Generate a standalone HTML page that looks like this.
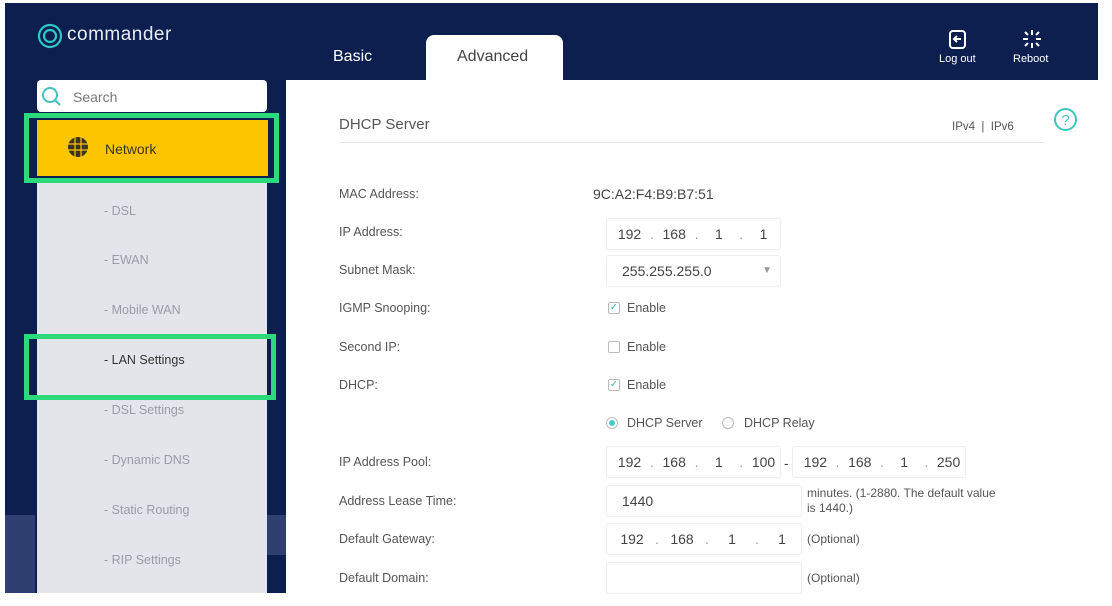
<!DOCTYPE html>
<html><head><style>
body{margin:0;width:1112px;height:606px;background:#fff;position:relative;overflow:hidden;font-family:"Liberation Sans",sans-serif;}
.a{position:absolute}
.navy{left:5px;top:3px;width:1093px;height:590px;background:#0d1f4f}
.side{left:37px;top:180px;width:230px;height:413px;background:#e3e5ea}
.si{position:absolute;left:104px;font-size:12.5px;color:#9a9ca4}
.lbl{position:absolute;left:339px;font-size:12.5px;color:#555}
.box{position:absolute;border:1px solid #eceef0;border-radius:3px;background:#fff;height:32px;box-sizing:border-box;font-size:14px;color:#444;line-height:30px}
.ip{display:flex;padding-left:6px}
.ip span{display:inline-block;text-align:center}
.ip .n{width:34px}.ip .d{width:12px;color:#999}
.cb{position:absolute;left:608px;width:12px;height:12px;border:1px solid #bbb;border-radius:2px;box-sizing:border-box;font-size:10px;color:#3bb;line-height:10px;text-align:center}
.en{position:absolute;left:627px;font-size:12.5px;color:#555}
.note{position:absolute;left:807px;font-size:12px;color:#555}
</style></head><body>
<div class="a navy"></div>
<div class="a" style="left:5px;top:515px;width:30px;height:78px;background:#2f4070"></div>
<div class="a" style="left:267px;top:515px;width:19px;height:40px;background:#2f4070"></div>
<svg class="a" style="left:37px;top:23px" width="26" height="26"><circle cx="13" cy="13" r="11" fill="none" stroke="#2fc6c6" stroke-width="2.2"/><circle cx="13" cy="13" r="6" fill="none" stroke="#2fc6c6" stroke-width="2.2"/></svg>
<div class="a" style="left:67px;top:24px;font-size:19px;color:#e8ecf5;letter-spacing:0.5px">commander</div>
<div class="a" style="left:333px;top:48px;font-size:16px;color:#fff">Basic</div>
<div class="a" style="left:426px;top:35px;width:137px;height:46px;background:#fff;border-radius:8px 8px 0 0"></div>
<div class="a" style="left:457px;top:48px;font-size:16px;color:#444">Advanced</div>
<svg class="a" style="left:948px;top:29px" width="20" height="22"><rect x="2" y="2" width="15" height="17" rx="3" fill="none" stroke="#fff" stroke-width="2"/><path d="M13 10H6M9 7l-3 3 3 3" fill="none" stroke="#fff" stroke-width="2"/></svg>
<div class="a" style="left:939px;top:53px;font-size:11px;color:#fff">Log out</div>
<svg class="a" style="left:1020px;top:28px" width="24" height="22" stroke="#fff" stroke-width="2"><path d="M12 2v5M12 15v5M3 11h5M16 11h5M5 4l3 3M16 15l3 3M19 4l-3 3M8 15l-3 3"/></svg>
<div class="a" style="left:1013px;top:53px;font-size:11px;color:#fff">Reboot</div>
<div class="a" style="left:286px;top:80px;width:812px;height:513px;background:#fff"></div>
<div class="a" style="left:37px;top:80px;width:230px;height:32px;background:#fff;border-radius:4px"></div>
<svg class="a" style="left:41px;top:86px" width="22" height="22"><circle cx="9" cy="9" r="7" fill="none" stroke="#44c2c0" stroke-width="2"/><path d="M14 14l5 5" stroke="#44c2c0" stroke-width="2"/></svg>
<div class="a" style="left:73px;top:89px;font-size:14px;color:#777">Search</div>
<div class="a side"></div>
<div class="a" style="left:37px;top:120px;width:231px;height:56px;background:#fdc500"></div>
<div class="a" style="left:24px;top:113px;width:245px;height:60px;border:5px solid #2ed97b"></div>
<svg class="a" style="left:67px;top:136px" width="22" height="22"><circle cx="11" cy="11" r="10" fill="#3a3520"/><path d="M1 8h20M1 14h20M8 1v20M14 1v20" stroke="#fdc500" stroke-width="1.2"/></svg>
<div class="a" style="left:105px;top:141px;font-size:14px;color:#3a3520">Network</div>
<div class="si" style="top:204px">- DSL</div>
<div class="si" style="top:253px">- EWAN</div>
<div class="si" style="top:303px">- Mobile WAN</div>
<div class="si" style="top:353px;color:#333">- LAN Settings</div>
<div class="a" style="left:24px;top:334px;width:242px;height:56px;border:5px solid #2ed97b"></div>
<div class="si" style="top:403px">- DSL Settings</div>
<div class="si" style="top:453px">- Dynamic DNS</div>
<div class="si" style="top:503px">- Static Routing</div>
<div class="si" style="top:553px">- RIP Settings</div>
<div class="a" style="left:339px;top:116px;font-size:15px;color:#555">DHCP Server</div>
<div class="a" style="left:952px;top:121px;font-size:11.5px;color:#555">IPv4 &nbsp;|&nbsp; IPv6</div>
<div class="a" style="left:340px;top:142px;width:705px;height:1px;background:#e4e4e4"></div>
<svg class="a" style="left:1053px;top:107px" width="25" height="25"><circle cx="12.5" cy="12.5" r="10.5" fill="none" stroke="#3fc6c0" stroke-width="2"/><text x="12.5" y="18" font-size="15" text-anchor="middle" fill="#3fc6c0" font-family="Liberation Sans">?</text></svg>
<div class="lbl" style="top:187px">MAC Address:</div>
<div class="lbl" style="top:225px">IP Address:</div>
<div class="lbl" style="top:263px">Subnet Mask:</div>
<div class="lbl" style="top:301px">IGMP Snooping:</div>
<div class="lbl" style="top:340px">Second IP:</div>
<div class="lbl" style="top:378px">DHCP:</div>
<div class="lbl" style="top:455px">IP Address Pool:</div>
<div class="lbl" style="top:494px">Address Lease Time:</div>
<div class="lbl" style="top:532px">Default Gateway:</div>
<div class="lbl" style="top:571px">Default Domain:</div>
<div class="a" style="left:593px;top:186px;font-size:14px;color:#444">9C:A2:F4:B9:B7:51</div>
<div class="box ip" style="left:606px;top:218px;width:175px"><span class="n">192</span><span class="d">.</span><span class="n">168</span><span class="d">.</span><span class="n">1</span><span class="d">.</span><span class="n">1</span></div>
<div class="box" style="left:606px;top:255px;width:175px;padding-left:15px">255.255.255.0<span style="position:absolute;right:8px;color:#999;font-size:10px">▼</span></div>
<div class="cb" style="top:302px">✓</div><div class="en" style="top:301px">Enable</div>
<div class="cb" style="top:341px"></div><div class="en" style="top:340px">Enable</div>
<div class="cb" style="top:379px">✓</div><div class="en" style="top:378px">Enable</div>
<div class="a" style="left:606px;top:417px;width:12px;height:12px;border:1px solid #bbb;border-radius:50%;box-sizing:border-box"><div style="margin:2px;width:6px;height:6px;border-radius:50%;background:#4cc"></div></div>
<div class="en" style="top:416px">DHCP Server</div>
<div class="a" style="left:722px;top:417px;width:12px;height:12px;border:1px solid #bbb;border-radius:50%;box-sizing:border-box"></div>
<div class="en" style="left:744px;top:416px">DHCP Relay</div>
<div class="box ip" style="left:606px;top:446px;width:175px"><span class="n">192</span><span class="d">.</span><span class="n">168</span><span class="d">.</span><span class="n">1</span><span class="d">.</span><span class="n">100</span></div>
<div class="a" style="left:784px;top:455px;font-size:14px;color:#444">-</div>
<div class="box ip" style="left:792px;top:446px;width:174px"><span class="n">192</span><span class="d">.</span><span class="n">168</span><span class="d">.</span><span class="n">1</span><span class="d">.</span><span class="n">250</span></div>
<div class="box" style="left:606px;top:485px;width:196px;padding-left:15px">1440</div>
<div class="note" style="top:486px;line-height:15px">minutes. (1-2880. The default value<br>is 1440.)</div>
<div class="box ip" style="left:606px;top:523px;width:196px;padding-left:8px"><span class="n">192</span><span class="d" style="width:16px">.</span><span class="n">168</span><span class="d" style="width:16px">.</span><span class="n">1</span><span class="d" style="width:16px">.</span><span class="n">1</span></div>
<div class="note" style="top:532px">(Optional)</div>
<div class="box" style="left:606px;top:562px;width:196px"></div>
<div class="note" style="top:571px">(Optional)</div>
</body></html>
